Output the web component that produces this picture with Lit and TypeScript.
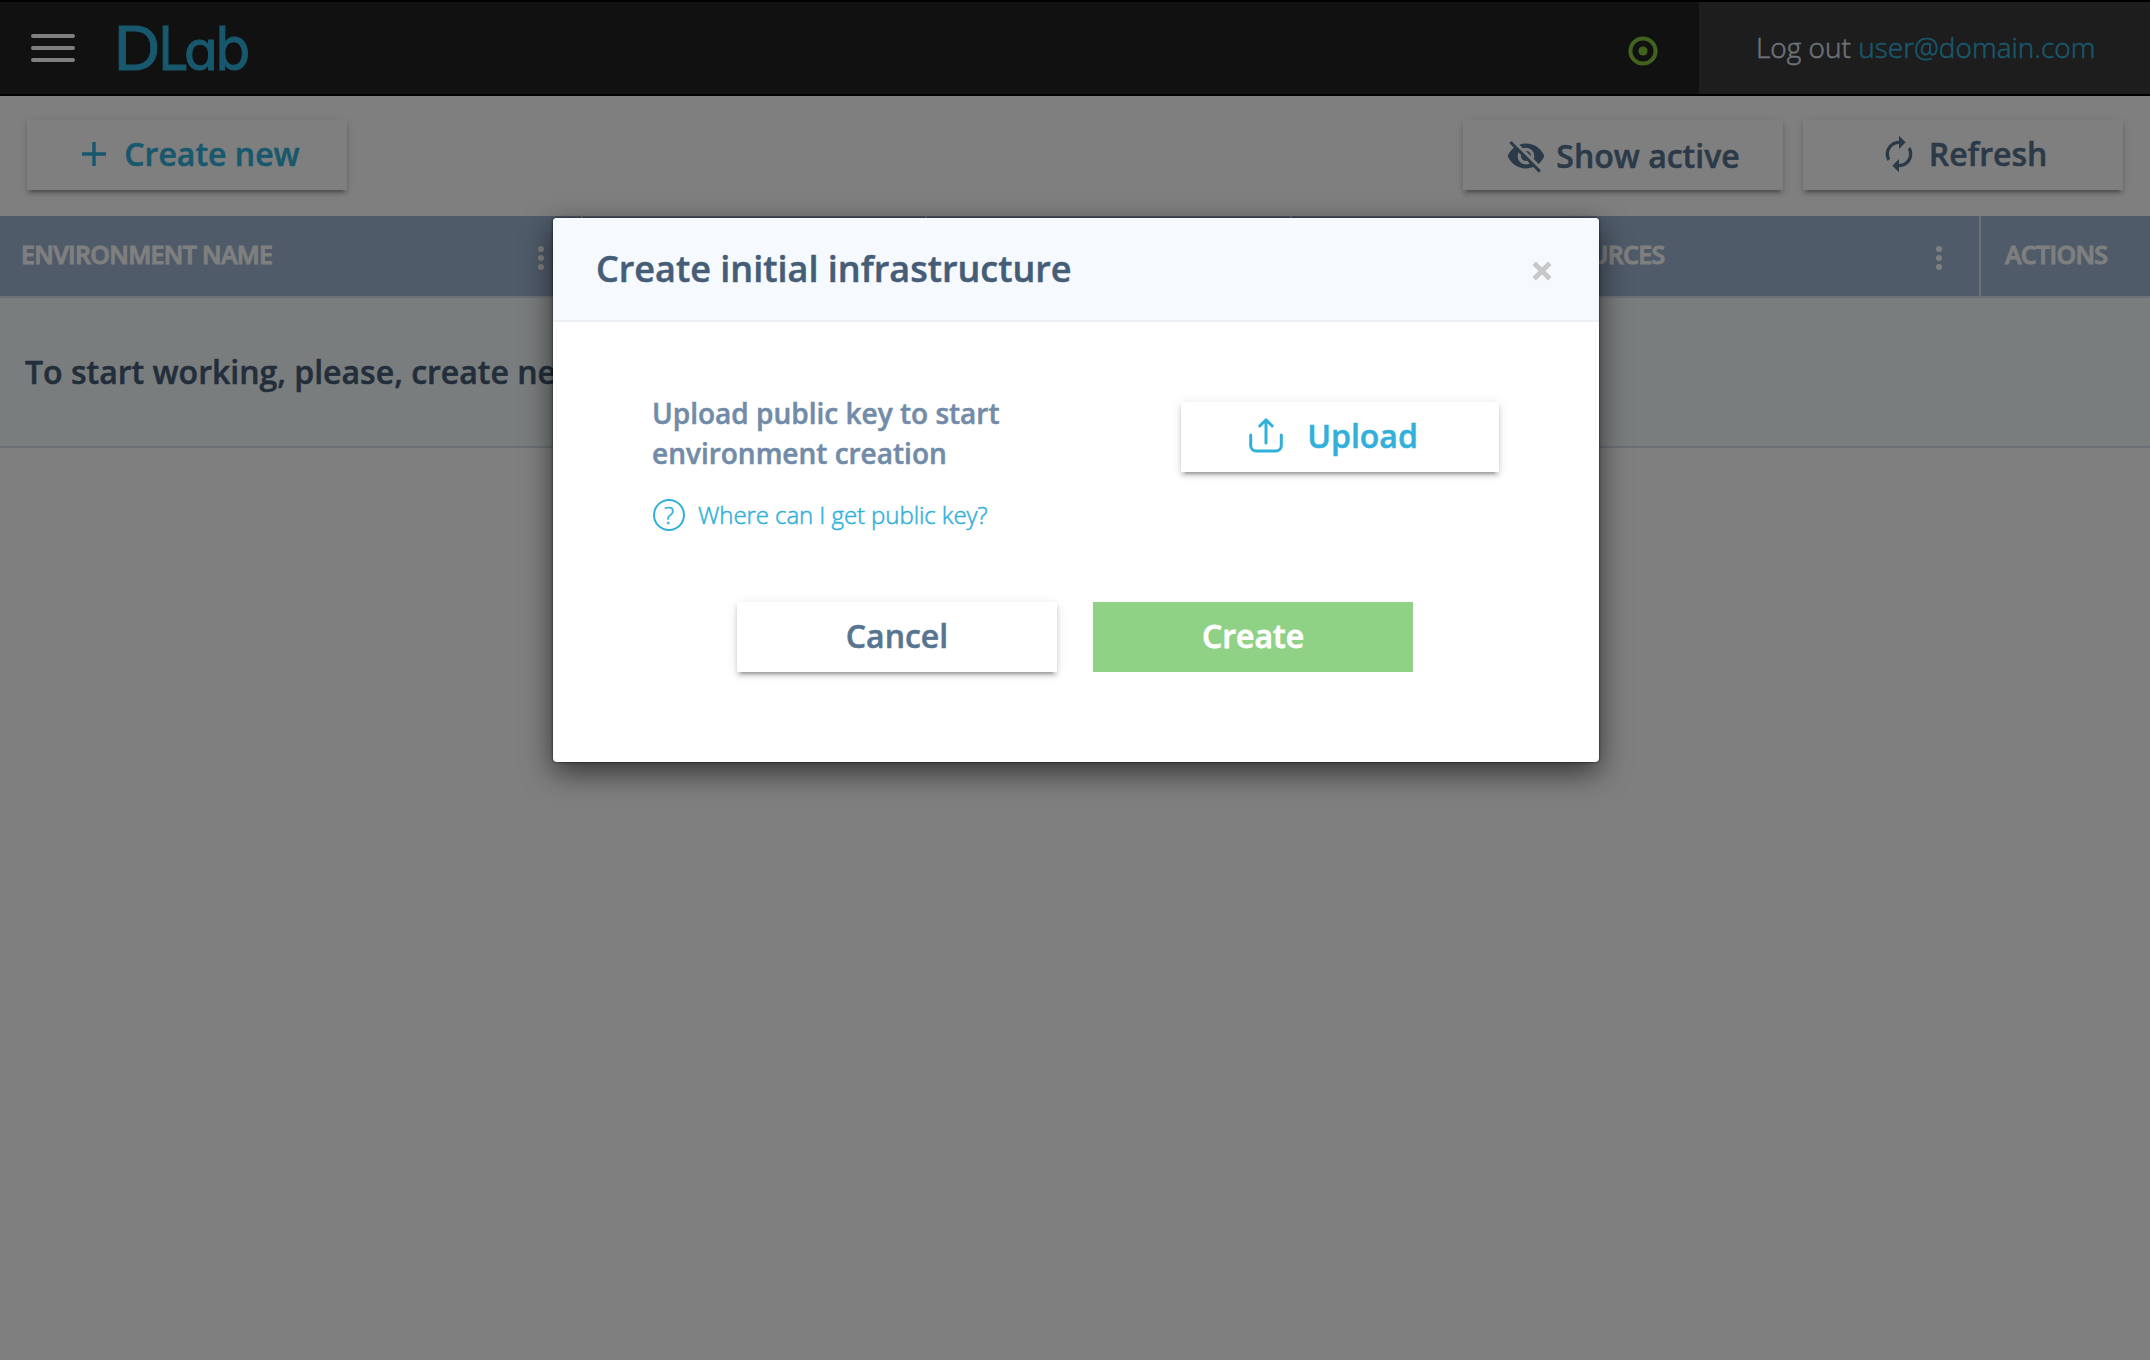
import { LitElement, html, css, svg } from "lit";
import { customElement } from "lit/decorators.js";

const eyeOff = svg`<path d="M12 7c2.76 0 5 2.24 5 5 0 .65-.13 1.26-.36 1.83l2.92 2.92c1.51-1.26 2.7-2.89 3.43-4.75-1.73-4.39-6-7.5-11-7.5-1.4 0-2.74.25-3.98.7l2.16 2.16C10.74 7.13 11.35 7 12 7zM2 4.27l2.28 2.28.46.46C3.08 8.3 1.78 10.02 1 12c1.73 4.39 6 7.5 11 7.5 1.55 0 3.03-.3 4.38-.84l.42.42L19.73 22 21 20.73 3.27 3 2 4.27zM7.53 9.8l1.55 1.55c-.05.21-.08.43-.08.65 0 1.66 1.34 3 3 3 .22 0 .44-.03.65-.08l1.55 1.55c-.67.33-1.41.53-2.2.53-2.76 0-5-2.24-5-5 0-.79.2-1.53.53-2.2zm4.31-.78l3.15 3.15.02-.16c0-1.66-1.34-3-3-3l-.17.01z"/>`;
const renew = svg`<path d="M12 6v3l4-4-4-4v3c-4.42 0-8 3.58-8 8 0 1.57.46 3.03 1.24 4.26L6.7 14.8c-.45-.83-.7-1.79-.7-2.8 0-3.31 2.69-6 6-6zm6.76 1.74L17.3 9.2c.44.84.7 1.79.7 2.8 0 3.31-2.69 6-6 6v-3l-4 4 4 4v-3c4.42 0 8-3.58 8-8 0-1.57-.46-3.03-1.24-4.26z"/>`;

@customElement("app-root")
export class AppRoot extends LitElement {
  static styles = css`
    :host {
      display: block;
      position: relative;
      height: 1360px;
      overflow: hidden;
      background: #fff;
      font-family: "Open Sans", "Noto Sans", sans-serif;
      color: #455d77;
      -webkit-text-stroke: 0.5px currentColor;
    }
    * { box-sizing: border-box; }
    svg { display: block; flex: none; }
    button {
      font: inherit;
      color: inherit;
      border: 0;
      margin: 0;
      padding: 0;
      background: none;
    }
    .topbar {
      display: flex;
      align-items: center;
      height: 96px;
      background: #222;
      border-top: 2px solid #000;
      border-bottom: 2px solid #000;
    }
    .burger {
      display: flex;
      flex-direction: column;
      gap: 8px;
      width: 44px;
      margin-left: 31px;
    }
    .burger i { height: 4px; border-radius: 2px; background: #fff; }
    .logo { margin-left: 34px; }
    .logo text {
      font-family: Inter, sans-serif;
      font-size: 60px;
      font-weight: 400;
      font-feature-settings: "cv11";
      fill: #30b0da;
      stroke: #30b0da;
      stroke-width: 1px;
    }
    .logo .low { font-size: 55px; }
    .status { margin-left: auto; margin-right: 41px; padding-top: 6px; }
    .account {
      display: flex;
      align-items: center;
      align-self: stretch;
      width: 451px;
      padding: 0 0 2px 57px;
      background: #3a3a3a;
      font-size: 28px;
      font-weight: 300;
      line-height: 40px;
      color: #dbe3f0;
      white-space: pre;
    }
    .account a { color: #30b0da; }
    .toolbar {
      display: flex;
      gap: 20px;
      height: 120px;
      padding: 24px 27px 0;
    }
    .btn {
      display: flex;
      align-items: center;
      justify-content: center;
      width: 320px;
      height: 70px;
      background: #fff;
      color: #577590;
      font-size: 32px;
      font-weight: 600;
      line-height: 44px;
      padding-bottom: 3px;
      white-space: nowrap;
      box-shadow: 0 6px 2px -4px rgba(0, 0, 0, 0.2),
        0 4px 4px 0 rgba(0, 0, 0, 0.14), 0 2px 10px 0 rgba(0, 0, 0, 0.12);
    }
    .cyan { color: #30b0da; }
    .new { margin-right: auto; gap: 18px; padding-left: 8px; }
    .active { gap: 10px; padding-bottom: 0; padding-top: 1px; }
    .refresh { gap: 10px; }
    .head {
      display: grid;
      grid-template-columns: 583px 344px 365px 1fr 169px;
      height: 82px;
      background: #9fb6d2;
      border-bottom: 2px solid #d8e2ec;
      color: #fff;
      font-size: 25px;
      font-weight: 600;
      letter-spacing: -0.68px;
      line-height: 34px;
      -webkit-text-stroke-width: 0.9px;
    }
    .cell {
      display: flex;
      justify-content: space-between;
      align-items: flex-start;
      padding: 21px 37px 0 21px;
      border-right: 2px solid #dae4ee;
      white-space: nowrap;
    }
    .cell.resources { padding-left: 26px; }
    .cell:last-child { border-right: 0; padding-left: 24px; }
    .dots { margin-top: 8px; margin-left: auto; }
    .row {
      height: 150px;
      padding: 52px 25px 0;
      background: #f4fbfb;
      border-bottom: 2px solid #d6e0ea;
      font-size: 32px;
      font-weight: 600;
      line-height: 44px;
    }
    .veil {
      position: absolute;
      inset: 0;
      display: flex;
      justify-content: center;
      align-items: flex-start;
      padding: 218px 0 0 2px;
      background: rgba(0, 0, 0, 0.5);
    }
    .modal {
      width: 1046px;
      height: 544px;
      background: #fff;
      border-radius: 4px;
      overflow: hidden;
      box-shadow: 0 0 2px 1px rgba(0, 0, 0, 0.35), 0 10px 30px rgba(0, 0, 0, 0.6);
    }
    .title {
      display: flex;
      justify-content: space-between;
      height: 104px;
      padding: 26px 47px 0 43px;
      background: #f6faff;
      border-bottom: 2px solid #ecf0f4;
      font-size: 36px;
      font-weight: 600;
      line-height: 50px;
    }
    .close { margin-top: 17px; }
    .body { padding: 58px 100px 0 99px; }
    .upload { display: flex; justify-content: space-between; align-items: flex-start; }
    .hint {
      margin: 13px 0 0;
      width: 400px;
      color: #718ba8;
      font-size: 28px;
      font-weight: 600;
      line-height: 40px;
    }
    .help {
      display: flex;
      align-items: center;
      gap: 13px;
      margin-top: 21px;
      padding-left: 1px;
      color: #30b0da;
      font-size: 24px;
      font-weight: 300;
      line-height: 40px;
      letter-spacing: -0.07px;
    }
    .help span:last-child { padding-top: 1px; }
    .q {
      display: flex;
      align-items: center;
      justify-content: center;
      width: 32px;
      height: 32px;
      border: 2px solid #30b0da;
      border-radius: 50%;
      font-size: 24px;
      line-height: 28px;
    }
    .send { width: 318px; margin-top: 22px; gap: 23px; padding-right: 14px; }
    .actions { display: flex; gap: 36px; margin-top: 67px; padding-left: 85px; }
    .create { background: #8fd185; color: #fff; box-shadow: none; -webkit-text-stroke-width: 0.8px; }
  `;

  private dots() {
    return html`<svg class="dots" width="6" height="26" viewBox="0 0 6 26" fill="#fff">
      <circle cx="3" cy="4" r="3" /><circle cx="3" cy="13" r="3" /><circle cx="3" cy="22" r="3" />
    </svg>`;
  }

  render() {
    return html`
      <header class="topbar">
        <div class="burger"><i></i><i></i><i></i></div>
        <svg class="logo" width="160" height="88" viewBox="-10 -14 160 88">
          <text transform="translate(-5.500 52) scale(1.09 1)">D</text>
          <text transform="translate(39.500 52) scale(0.88 1)">L</text>
          <text class="low" transform="translate(65 52)">a</text>
          <text transform="translate(96.500 52) scale(0.95 1)">b</text>
        </svg>
        <div class="status">
          <svg width="30" height="30" viewBox="0 0 30 30">
            <circle cx="15" cy="15" r="12.6" fill="none" stroke="#84c63c" stroke-width="4" />
            <circle cx="15" cy="15" r="4.6" fill="#84c63c" />
          </svg>
        </div>
        <div class="account"><span>Log out </span><a>user@domain.com</a></div>
      </header>

      <div class="toolbar">
        <button class="btn cyan new">
          <svg width="24" height="24" viewBox="0 0 24 24" stroke="currentColor" stroke-width="3.4">
            <path d="M12 0v24M0 12h24" />
          </svg>
          <span>Create new</span>
        </button>
        <button class="btn active">
          <svg width="40" height="40" viewBox="0 0 24 24" fill="currentColor">${eyeOff}</svg>
          <span>Show active</span>
        </button>
        <button class="btn refresh">
          <svg width="40" height="40" viewBox="0 0 24 24" fill="currentColor">${renew}</svg>
          <span>Refresh</span>
        </button>
      </div>

      <div class="head">
        <div class="cell"><span>ENVIRONMENT NAME</span>${this.dots()}</div>
        <div class="cell"></div>
        <div class="cell"></div>
        <div class="cell resources"><span>COMPUTATIONAL RESOURCES</span>${this.dots()}</div>
        <div class="cell"><span>ACTIONS</span></div>
      </div>
      <div class="row">To start working, please, create new environment</div>

      <div class="veil">
        <div class="modal">
          <div class="title">
            <span>Create initial infrastructure</span>
            <svg class="close" width="20" height="20" viewBox="0 0 20 20" stroke="#c6c8ca" stroke-width="5">
              <path d="M2.2 2.2l15.6 15.6M17.8 2.2L2.2 17.8" />
            </svg>
          </div>
          <div class="body">
            <div class="upload">
              <div>
                <p class="hint">Upload public key to start environment creation</p>
                <div class="help"><span class="q">?</span><span>Where can I get public key?</span></div>
              </div>
              <button class="btn cyan send">
                <svg width="36" height="36" viewBox="0 1 36 36" fill="none" stroke="currentColor"
                  stroke-width="3" stroke-linecap="round" stroke-linejoin="round">
                  <path d="M18 26V3M11.8 9L18 2.8 24.2 9M2.7 18v10.5a5.500 5.500 0 0 0 5.500 5.500h19.600a5.500 5.500 0 0 0 5.500-5.500V18" />
                </svg>
                <span>Upload</span>
              </button>
            </div>
            <div class="actions">
              <button class="btn">Cancel</button>
              <button class="btn create">Create</button>
            </div>
          </div>
        </div>
      </div>
    `;
  }
}
